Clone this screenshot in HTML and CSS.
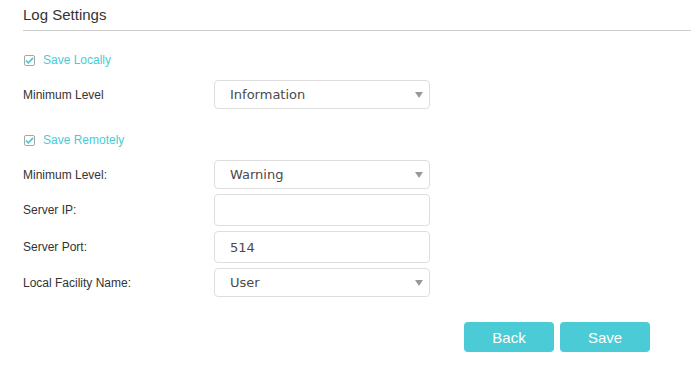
FILE: index.html
```html
<!DOCTYPE html>
<html lang="en">
<head>
    <meta charset="UTF-8">
    <title>Log Settings</title>
    <link rel="stylesheet" href="styles.css">
</head>
<body>
    <div class="panel">
        <h2 class="panel-title">Log Settings</h2>

        <div class="group">
            <label class="check">
                <span class="check-box">
                    <svg width="9" height="9" viewBox="0 0 9 9"><path d="M1 4.6 L3.4 6.8 L8 1.8" fill="none" stroke="#4acbd6" stroke-width="1.8"/></svg>
                </span>
                Save Locally
            </label>
            <div class="row">
                <span class="row-label">Minimum Level</span>
                <div class="field select">Information<span class="caret"></span></div>
            </div>
        </div>

        <div class="group">
            <label class="check">
                <span class="check-box">
                    <svg width="9" height="9" viewBox="0 0 9 9"><path d="M1 4.6 L3.4 6.8 L8 1.8" fill="none" stroke="#4acbd6" stroke-width="1.8"/></svg>
                </span>
                Save Remotely
            </label>
            <div class="row">
                <span class="row-label">Minimum Level:</span>
                <div class="field select">Warning<span class="caret"></span></div>
            </div>
            <div class="row">
                <span class="row-label">Server IP:</span>
                <div class="field input"></div>
            </div>
            <div class="row">
                <span class="row-label">Server Port:</span>
                <div class="field input">514</div>
            </div>
            <div class="row">
                <span class="row-label">Local Facility Name:</span>
                <div class="field select">User<span class="caret"></span></div>
            </div>
        </div>

        <div class="actions">
            <button class="btn">Back</button>
            <button class="btn">Save</button>
        </div>
    </div>
</body>
</html>
```

FILE: styles.css
```css
* {
    margin: 0;
    padding: 0;
    box-sizing: border-box;
}

body {
    font-family: "Liberation Sans", Arial, sans-serif;
    background: #fff;
    color: #333;
}

.panel {
    padding-left: 23px;
}

.panel-title {
    font-size: 15px;
    font-weight: normal;
    line-height: 18px;
    padding: 6px 0 6px;
    border-bottom: 1px solid #ccc;
    color: #333;
}

.group {
    margin-top: 22px;
}

.group + .group {
    margin-top: 24px;
}

.check {
    display: flex;
    align-items: center;
    gap: 8px;
    font-size: 12px;
    line-height: 14px;
    color: #4acbd6;
    margin-bottom: 13px;
    padding-left: 1px;
}

.check-box {
    width: 11px;
    height: 11px;
    border: 1px solid #a6a6a6;
    border-radius: 2px;
    display: flex;
    align-items: center;
    justify-content: center;
}

.row {
    display: flex;
    align-items: center;
    margin-bottom: 5px;
}

.row-label {
    width: 191px;
    font-size: 12px;
    color: #333;
}

.field {
    position: relative;
    width: 216px;
    border: 1px solid #dedede;
    border-radius: 4px;
    padding-left: 15px;
    font-family: "DejaVu Sans", Verdana, sans-serif;
    font-size: 13px;
    color: #4a4a4a;
    display: flex;
    align-items: center;
}

.select {
    height: 29px;
}

.input {
    height: 32px;
}

.caret {
    position: absolute;
    right: 6px;
    top: 50%;
    margin-top: -3px;
    border-left: 4px solid transparent;
    border-right: 4px solid transparent;
    border-top: 6px solid #999;
}

.actions {
    display: flex;
    justify-content: flex-end;
    gap: 6px;
    margin-top: 25px;
    padding-right: 41px;
}

.btn {
    width: 90px;
    height: 30px;
    border: none;
    border-radius: 4px;
    background: #4acbd6;
    color: #fff;
    font-family: "Liberation Sans", Arial, sans-serif;
    font-size: 15px;
}
```
